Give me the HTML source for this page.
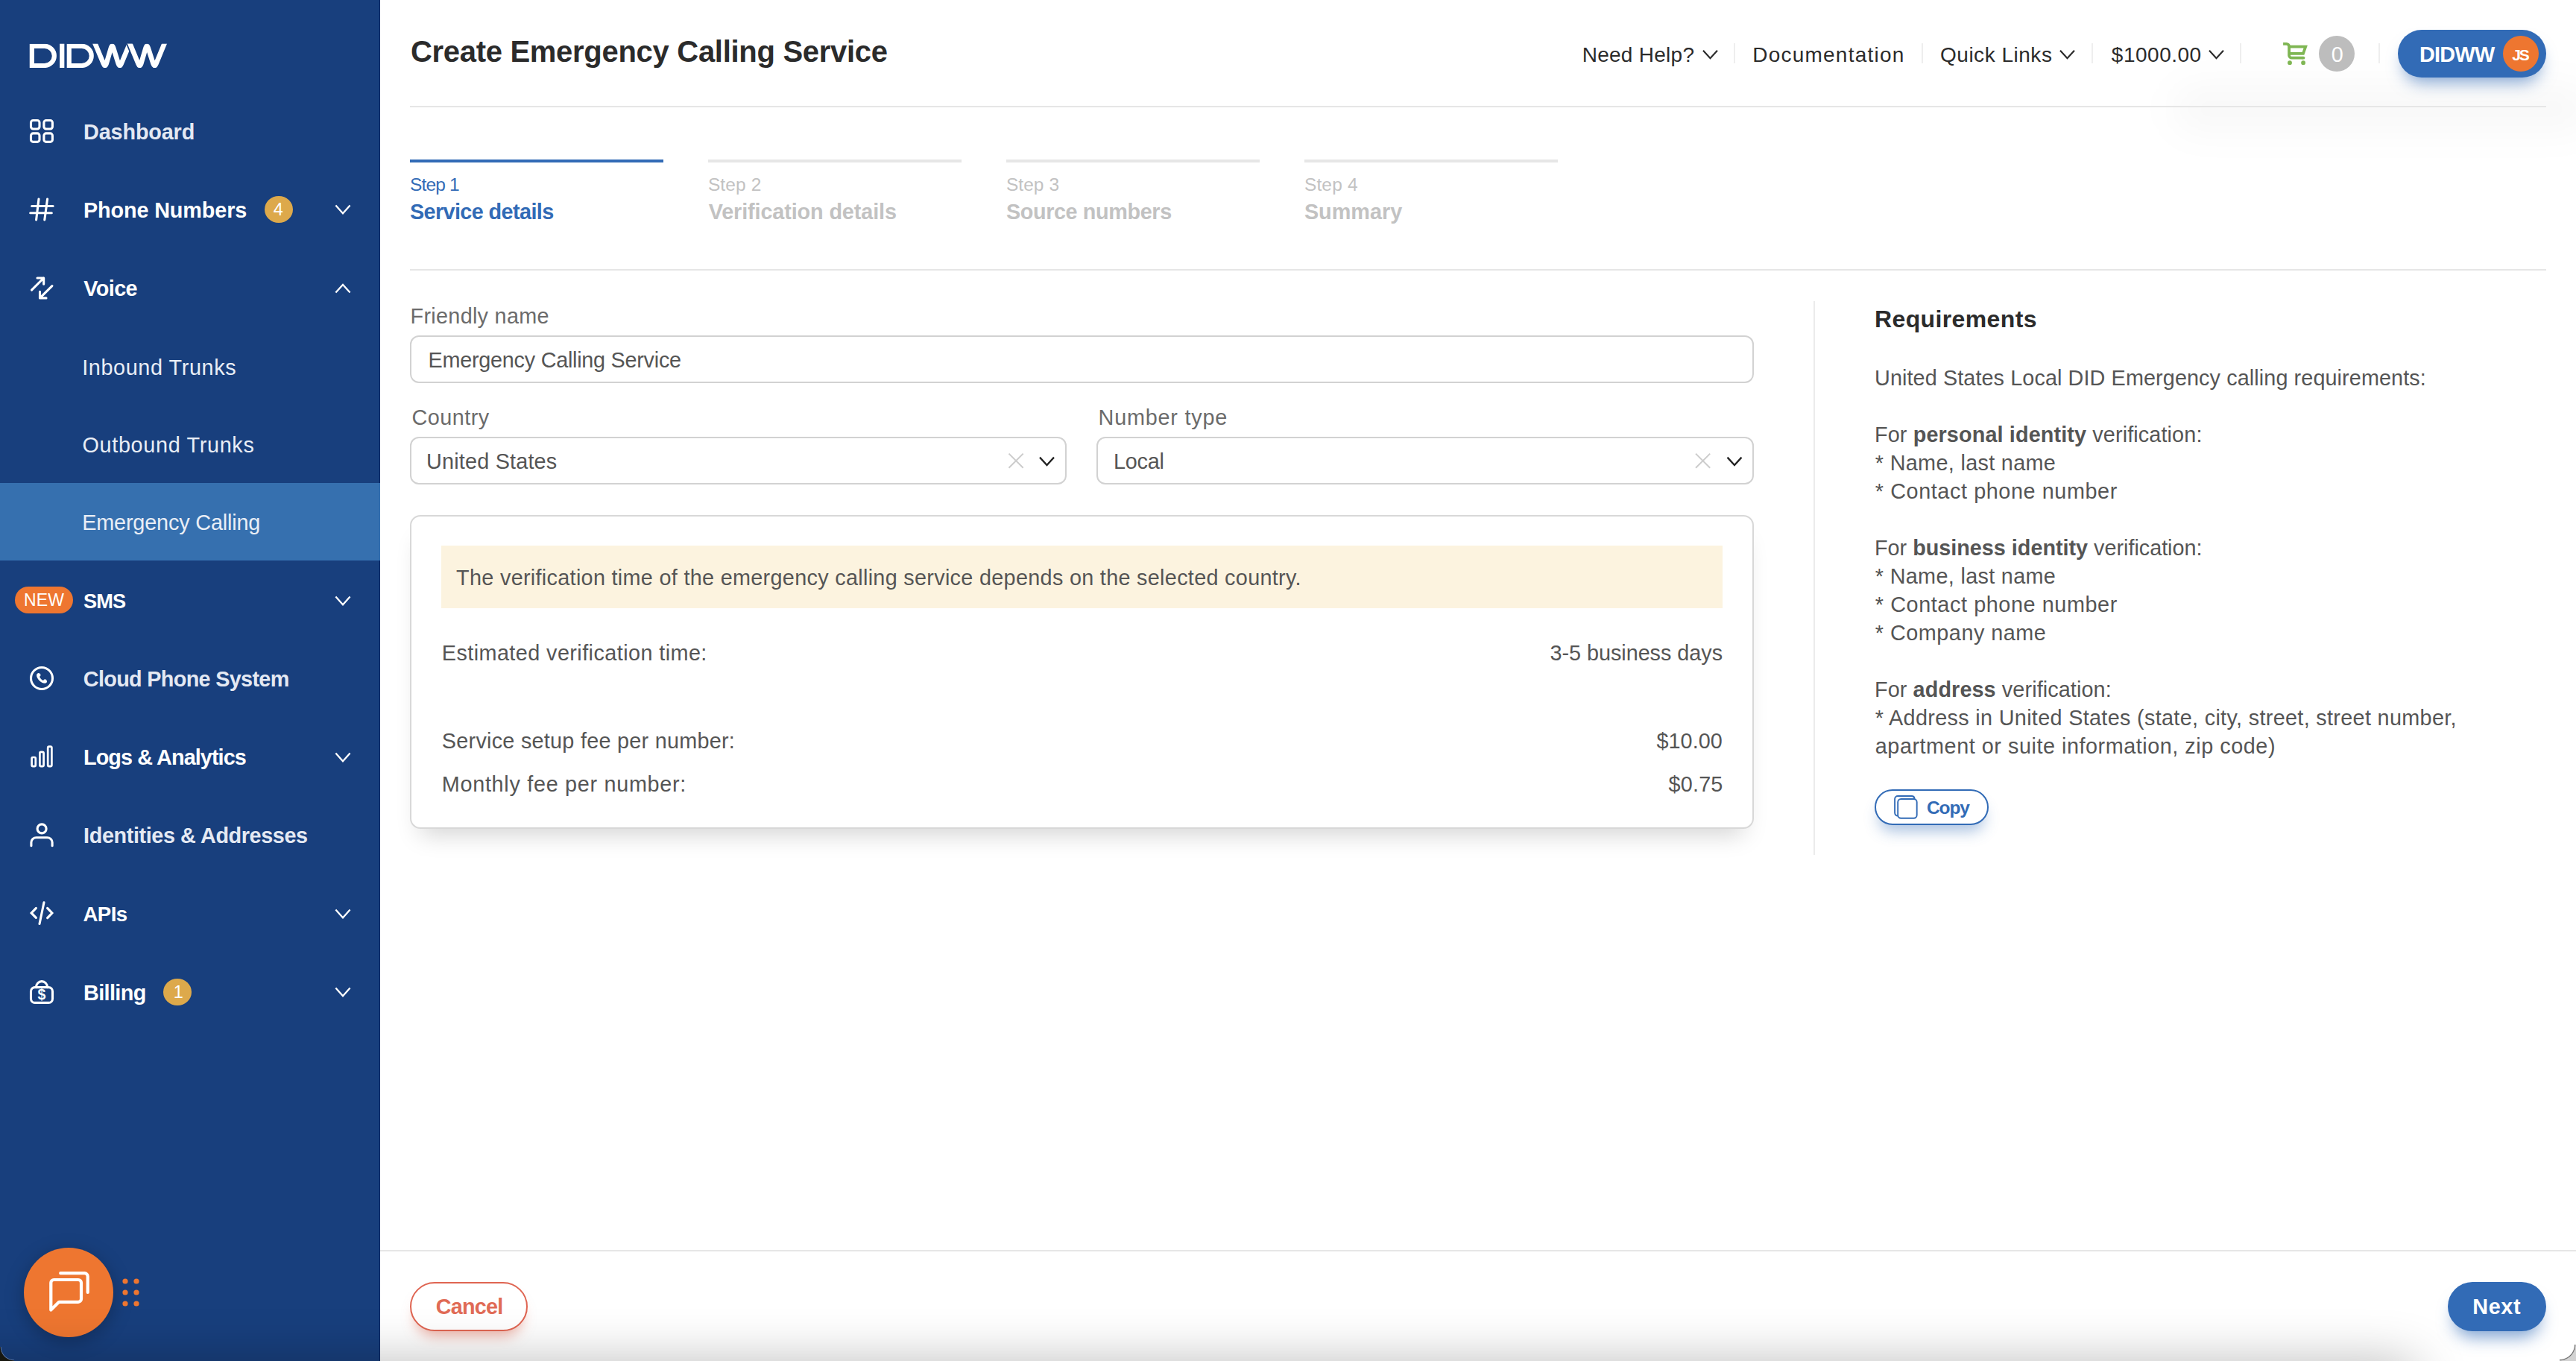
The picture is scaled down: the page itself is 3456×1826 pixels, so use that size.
<!DOCTYPE html>
<html lang="en"><head><meta charset="utf-8"><title>Create Emergency Calling Service</title>
<style>
*{box-sizing:border-box;margin:0;padding:0}
html,body{width:3456px;height:1826px;overflow:hidden;background:#fff}
body{position:relative;font-family:"Liberation Sans",sans-serif;color:#555555}
.a{position:absolute}
.t{position:absolute;white-space:nowrap;line-height:1;font-family:"Liberation Sans",sans-serif}
.t b{font-weight:700}
svg{position:absolute;overflow:visible}
.sidebar{left:0;top:0;width:510px;height:1826px;background:#183f7d;box-shadow:inset -1px 0 0 rgba(0,25,80,.55)}
.active{left:0;top:648px;width:510px;height:104px;background:#3670af}
.hl{height:2px;background:#e6e6e6}
.vsep{width:2px;height:27px;top:58px;background:#eeeeee}
.badge{border-radius:50%;background:#dda94b}
.inp{border:2px solid #d2d2d2;border-radius:12px;background:#fff}
.card{left:550px;top:690.5px;width:1803px;height:421px;border:2px solid #d8d8d8;border-radius:14px;background:#fff;box-shadow:0 22px 30px -14px rgba(0,0,0,.17)}
.banner{left:592px;top:732px;width:1719px;height:84px;background:#fcf3df}
.pill{border-radius:40px}
.bottomshade{left:-120px;top:1830px;width:3360px;height:60px;background:#000;box-shadow:0 0 70px 0 rgba(0,0,0,.30)}
.cbl{left:0;top:1807px;width:19px;height:19px;background:radial-gradient(circle at 100% 0%,rgba(0,0,0,0) 17px,rgba(150,170,210,.55) 17.8px,#17170f 18.8px)}
.cbr{left:3434px;top:1804px;width:22px;height:22px;background:radial-gradient(circle at 0% 0%,rgba(0,0,0,0) 19.5px,#6a6a6a 20.5px,#d2d2d2 21.8px)}

</style></head><body>
<!-- ===== main area chrome ===== -->
<div class="a" style="left:2915px;top:114px;width:560px;height:64px;border-radius:30px;background:rgba(0,0,0,.028);filter:blur(24px)"></div>
<div class="a hl" style="left:550px;top:142px;width:2866px"></div>
<div class="a hl" style="left:550px;top:361px;width:2866px"></div>
<div class="a hl" style="left:510px;top:1677px;width:2946px"></div>

<!-- steps -->
<div class="a" style="left:550px;top:214px;width:340px;height:4px;background:#326bb6"></div>
<div class="a" style="left:950px;top:214px;width:340px;height:4px;background:#e6e6e6"></div>
<div class="a" style="left:1350px;top:214px;width:340px;height:4px;background:#e6e6e6"></div>
<div class="a" style="left:1750px;top:214px;width:340px;height:4px;background:#e6e6e6"></div>

<!-- header separators -->
<div class="a vsep" style="left:2326px"></div>
<div class="a vsep" style="left:2578px"></div>
<div class="a vsep" style="left:2806px"></div>
<div class="a vsep" style="left:3005px"></div>
<div class="a vsep" style="left:3191px"></div>

<!-- cart count -->
<div class="a" style="left:3111px;top:48px;width:48px;height:48px;border-radius:50%;background:#bdbdbd"></div>
<!-- user pill -->
<div class="a pill" style="left:3217px;top:40px;width:199px;height:64px;background:#326bb6;box-shadow:0 14px 22px -8px rgba(50,107,182,.62)"></div>
<div class="a" style="left:3358px;top:48px;width:48px;height:48px;border-radius:50%;background:#ee7630"></div>

<!-- form -->
<div class="a inp" style="left:550px;top:450px;width:1803px;height:64px"></div>
<div class="a inp" style="left:550px;top:586px;width:881px;height:64px"></div>
<div class="a inp" style="left:1471px;top:586px;width:882px;height:64px"></div>
<div class="a card"></div>
<div class="a banner"></div>

<!-- vertical divider -->
<div class="a" style="left:2433px;top:404px;width:2px;height:743px;background:#ebebeb"></div>

<!-- copy button -->
<div class="a pill" style="left:2515px;top:1059px;width:153px;height:48px;border:2px solid #326bb6;background:#fff;box-shadow:0 14px 20px -6px rgba(50,107,182,.42)"></div>

<!-- footer buttons -->
<div class="a pill" style="left:550px;top:1720px;width:158px;height:66px;border:2px solid #df6552;background:#fff;box-shadow:0 14px 18px -8px rgba(224,112,90,.55)"></div>
<div class="a pill" style="left:3284px;top:1720px;width:132px;height:66px;background:#326bb6;box-shadow:0 16px 22px -8px rgba(50,107,182,.62)"></div>

<!-- ===== sidebar ===== -->
<div class="a sidebar"></div>
<div class="a active"></div>
<div class="a badge" style="left:355px;top:262.8px;width:38.4px;height:36.4px"></div>
<div class="a badge" style="left:218.9px;top:1312.8px;width:38.4px;height:36.4px"></div>
<div class="a pill" style="left:20px;top:787px;width:78px;height:36px;background:#ee7630"></div>
<div class="a" style="left:32px;top:1674px;width:120px;height:120px;border-radius:50%;background:#ee7630;box-shadow:0 6px 26px rgba(0,0,0,.26)"></div>
<svg class="a" style="left:0;top:0" width="3456" height="1826" viewBox="0 0 3456 1826" fill="none" stroke-linecap="round" stroke-linejoin="round">
<!-- logo (drawn in zoom coords: origin 20,40 scale 1/10.733) -->
<g transform="translate(20 40) scale(0.09317)">
  <clipPath id="lc"><rect x="0" y="202" width="2576" height="346"/></clipPath>
  <g clip-path="url(#lc)" stroke="#fff" fill="none" stroke-linecap="butt">
    <path d="M245,235 H427 A140,140 0 0 1 427,515 H245 Z" stroke-width="66" stroke-linejoin="miter"/>
    <path d="M678.5,190 V560" stroke-width="67"/>
    <path d="M781,235 H963 A140,140 0 0 1 963,515 H781 Z" stroke-width="66" stroke-linejoin="miter"/>
    <path d="M1134.7,150.0 L1276.1,487.8 Q1300.0,545.0 1317.5,485.5 L1382.5,264.5 Q1400.0,205.0 1418.8,264.1 L1489.2,485.9 Q1508.0,545.0 1531.9,487.8 L1672.7,150.0" stroke-width="70" stroke-linejoin="round"/>
    <path d="M1636.5,150.0 L1800,545" stroke="#183f7d" stroke-width="106"/>
    <path d="M1636.5,150.0 L1776.3,487.7 Q1800.0,545.0 1817.5,485.5 L1882.5,264.5 Q1900.0,205.0 1919.1,264.0 L1990.9,486.0 Q2010.0,545.0 2033.6,487.7 L2172.4,150.0" stroke-width="70" stroke-linejoin="round"/>
  </g>
</g>
<g stroke="#fff" stroke-width="3.1">
  <!-- dashboard -->
  <rect x="41.5" y="161.5" width="11.5" height="11.5" rx="3"/>
  <rect x="58.9" y="161.5" width="11.5" height="11.5" rx="3"/>
  <rect x="41.5" y="178.9" width="11.5" height="11.5" rx="3"/>
  <rect x="58.9" y="178.9" width="11.5" height="11.5" rx="3"/>
  <!-- hash -->
  <path d="M52,267 L48.6,294.9 M63.6,267 L59.8,294.9 M42.7,276.5 H71.1 M40.7,285.7 H69.3"/>
  <!-- voice -->
  <path d="M42.5,389.2 L58.65,373 M50,373 H58.65 V381.3 M69.9,383.7 L53.5,399.9 M53.5,391.4 V399.9 H62"/>
  <!-- cloud phone -->
  <circle cx="56" cy="910" r="14.5"/>
  <!-- identities -->
  <circle cx="56.1" cy="1111.9" r="6"/>
  <path d="M41.9,1134.7 V1130.3 A6.8,6.5 0 0 1 48.7,1123.8 H63.3 A6.8,6.5 0 0 1 70.1,1130.3 V1134.7"/>
  <!-- apis -->
  <path d="M59,1210.7 L53,1239.5 M48.4,1218.4 L42.1,1224.9 L48.4,1231.4 M63.6,1218.4 L69.9,1225 L63.6,1231.6" stroke-linejoin="miter"/>
  <!-- billing -->
  <rect x="41.5" y="1324.6" width="29" height="20.8" rx="5.5"/>
  <path d="M48.4,1324.6 A7.6,8 0 0 1 63.6,1324.6"/>
</g>
<!-- phone handset -->
<path fill="#fff" d="M49.1,905.6 C49.3,904 50.6,903 51.7,903 C53,903.2 54.8,904.6 54.6,906 C54.4,907 53.4,907.2 53.2,907.9 C53.6,909.6 56.2,912.3 57.9,912.9 C58.7,912.9 59.2,911.4 60.2,911.3 C61.4,911.3 63.3,913.2 63.1,914.5 C62.8,915.8 61.6,916.7 60.5,916.8 C55.5,917.2 48.8,910.6 49.1,905.6 Z"/>
<!-- logs bars -->
<g stroke="#fff" stroke-width="2.7">
  <rect x="42.6" y="1016" width="5.2" height="12.2" rx="1.6"/>
  <rect x="53.4" y="1008.8" width="5.2" height="19.4" rx="1.6"/>
  <rect x="64.2" y="1001.6" width="5.2" height="26.6" rx="1.6"/>
</g>
<text x="56" y="1341" font-family="Liberation Sans, sans-serif" font-weight="700" font-size="19.5" fill="#fff" text-anchor="middle">$</text>
<!-- sidebar chevrons -->
<g stroke="#fff" stroke-width="2.3" stroke-linecap="butt" stroke-linejoin="miter">
  <path d="M450.4,275.6 L460,286.2 L469.6,275.6"/>
  <path d="M450.4,392.5 L460,382 L469.6,392.5"/>
  <path d="M450.4,800.6 L460,811.2 L469.6,800.6"/>
  <path d="M450.4,1010.6 L460,1021.2 L469.6,1010.6"/>
  <path d="M450.4,1220.6 L460,1231.2 L469.6,1220.6"/>
  <path d="M450.4,1325.6 L460,1336.2 L469.6,1325.6"/>
</g>
<!-- chat icon -->
<g stroke="#fff" stroke-width="4.2">
  <path d="M68.3,1757.6 V1721 A4,4 0 0 1 72.3,1717 H105 A4,4 0 0 1 109,1721 V1742.8 A4,4 0 0 1 105,1746.8 H79.2 Z"/>
  <path d="M81.2,1708.2 H113.5 A4.2,4.2 0 0 1 117.7,1712.4 V1734"/>
</g>
<g fill="#ee7630">
  <circle cx="168" cy="1719" r="3.6"/><circle cx="183" cy="1719" r="3.6"/>
  <circle cx="168" cy="1734" r="3.6"/><circle cx="183" cy="1734" r="3.6"/>
  <circle cx="168" cy="1749" r="3.6"/><circle cx="183" cy="1749" r="3.6"/>
</g>
<!-- header chevrons -->
<g stroke="#2b2b2b" stroke-width="2.2" stroke-linecap="butt" stroke-linejoin="miter">
  <path d="M2285,67.8 L2294.5,78.2 L2304,67.8"/>
  <path d="M2764,67.8 L2773.5,78.2 L2783,67.8"/>
  <path d="M2964,67.8 L2973.5,78.2 L2983,67.8"/>
</g>
<!-- cart -->
<g stroke="#7fb653" stroke-width="3.8" stroke-linecap="butt" stroke-linejoin="miter">
  <path d="M3063.1,58.9 H3067.5 A3.6,3.6 0 0 1 3071.1,62.5 V74.2 A3.5,3.5 0 0 0 3074.6,77.7 H3089.5" />
  <path d="M3089.5,77.7 H3090.5" stroke-linecap="round"/>
  <path d="M3071.1,62.7 H3093.2 L3090,71.8 H3071.1"/>
</g>
<circle cx="3072" cy="84.2" r="2.9" fill="#7fb653"/><circle cx="3090.1" cy="84.2" r="2.9" fill="#7fb653"/>
<!-- select icons -->
<g stroke="#cccccc" stroke-width="2" stroke-linecap="butt">
  <path d="M1353.5,608.6 L1372.7,627.8 M1372.7,608.6 L1353.5,627.8"/>
  <path d="M2275,608.6 L2294.2,627.8 M2294.2,608.6 L2275,627.8"/>
</g>
<g stroke="#222" stroke-width="2.3" stroke-linecap="butt" stroke-linejoin="miter">
  <path d="M1395,613.6 L1404.5,624 L1414,613.6"/>
  <path d="M2317.5,613.6 L2327,624 L2336.5,613.6"/>
</g>
<!-- copy icon -->
<g stroke="#326bb6" stroke-width="1.9">
  <path d="M2546.2,1094.6 A4,4 0 0 1 2542.1,1090.6 V1072 A4,4 0 0 1 2546.1,1068 H2564.6 A4,4 0 0 1 2568.6,1071.4"/>
  <rect x="2546.2" y="1072" width="25.5" height="25.8" rx="4.2" fill="#fff"/>
</g>
</svg>

<div class="a bottomshade"></div>
<div class="a cbl"></div>
<div class="a cbr"></div>
<div id="title" class="t" style="left:550.9px;top:49.4px;font-size:40px;font-weight:700;color:#2b2b2b;letter-spacing:-0.294px">Create Emergency Calling Service</div>
<div id="h1" class="t" style="left:2122.7px;top:59.6px;font-size:28px;font-weight:400;color:#2b2b2b;letter-spacing:0.272px">Need Help?</div>
<div id="h2" class="t" style="left:2351.2px;top:59.6px;font-size:28px;font-weight:400;color:#2b2b2b;letter-spacing:1.235px">Documentation</div>
<div id="h3" class="t" style="left:2603.0px;top:59.6px;font-size:28px;font-weight:400;color:#2b2b2b;letter-spacing:0.516px">Quick Links</div>
<div id="h4" class="t" style="left:2832.8px;top:59.6px;font-size:28px;font-weight:400;color:#2b2b2b;letter-spacing:0.513px">$1000.00</div>
<div id="h5" class="t" style="left:3127.8px;top:59.1px;font-size:28.8px;font-weight:400;color:#ffffff;letter-spacing:0.000px">0</div>
<div id="h6" class="t" style="left:3246.0px;top:58.9px;font-size:28.8px;font-weight:700;color:#ffffff;letter-spacing:-0.711px">DIDWW</div>
<div id="h7" class="t" style="left:3370.2px;top:63.0px;font-size:21px;font-weight:700;color:#ffffff;letter-spacing:-2.144px">JS</div>
<div id="s1a" class="t" style="left:549.9px;top:236.0px;font-size:24.5px;font-weight:400;color:#326bb6;letter-spacing:-0.824px">Step 1</div>
<div id="s1b" class="t" style="left:549.9px;top:270.0px;font-size:28.8px;font-weight:700;color:#326bb6;letter-spacing:-0.595px">Service details</div>
<div id="s2a" class="t" style="left:949.9px;top:236.0px;font-size:24.5px;font-weight:400;color:#c2c2c2;letter-spacing:0.109px">Step 2</div>
<div id="s2b" class="t" style="left:950.7px;top:270.0px;font-size:28.8px;font-weight:700;color:#c2c2c2;letter-spacing:-0.118px">Verification details</div>
<div id="s3a" class="t" style="left:1349.9px;top:236.0px;font-size:24.5px;font-weight:400;color:#c2c2c2;letter-spacing:0.059px">Step 3</div>
<div id="s3b" class="t" style="left:1349.9px;top:270.0px;font-size:28.8px;font-weight:700;color:#c2c2c2;letter-spacing:-0.382px">Source numbers</div>
<div id="s4a" class="t" style="left:1749.9px;top:236.0px;font-size:24.5px;font-weight:400;color:#c2c2c2;letter-spacing:0.159px">Step 4</div>
<div id="s4b" class="t" style="left:1749.9px;top:270.0px;font-size:28.8px;font-weight:700;color:#c2c2c2;letter-spacing:0.007px">Summary</div>
<div id="f1" class="t" style="left:550.6px;top:410.0px;font-size:28.8px;font-weight:400;color:#6b6b6b;letter-spacing:0.287px">Friendly name</div>
<div id="f2" class="t" style="left:574.6px;top:469.0px;font-size:28.8px;font-weight:400;color:#555555;letter-spacing:-0.261px">Emergency Calling Service</div>
<div id="f3" class="t" style="left:552.4px;top:546.0px;font-size:28.8px;font-weight:400;color:#6b6b6b;letter-spacing:0.494px">Country</div>
<div id="f4" class="t" style="left:572.1px;top:605.0px;font-size:28.8px;font-weight:400;color:#555555;letter-spacing:0.185px">United States</div>
<div id="f5" class="t" style="left:1473.6px;top:546.1px;font-size:28.8px;font-weight:400;color:#6b6b6b;letter-spacing:0.786px">Number type</div>
<div id="f6" class="t" style="left:1494.0px;top:605.1px;font-size:28.8px;font-weight:400;color:#555555;letter-spacing:-0.249px">Local</div>
<div id="c1" class="t" style="left:612.1px;top:761.0px;font-size:28.8px;font-weight:400;color:#555555;letter-spacing:0.306px">The verification time of the emergency calling service depends on the selected country.</div>
<div id="c2" class="t" style="left:592.8px;top:862.1px;font-size:28.8px;font-weight:400;color:#555555;letter-spacing:0.425px">Estimated verification time:</div>
<div id="c3" class="t" style="right:1145.0px;top:862.4px;font-size:28.8px;font-weight:400;color:#555555;letter-spacing:-0.036px">3-5 business days</div>
<div id="c4" class="t" style="left:592.8px;top:980.1px;font-size:28.8px;font-weight:400;color:#555555;letter-spacing:0.260px">Service setup fee per number:</div>
<div id="c5" class="t" style="right:1145.2px;top:980.0px;font-size:28.8px;font-weight:400;color:#555555;letter-spacing:0.037px">$10.00</div>
<div id="c6" class="t" style="left:592.8px;top:1037.5px;font-size:28.8px;font-weight:400;color:#555555;letter-spacing:0.698px">Monthly fee per number:</div>
<div id="c7" class="t" style="right:1144.4px;top:1037.5px;font-size:28.8px;font-weight:400;color:#555555;letter-spacing:0.224px">$0.75</div>
<div id="r0" class="t" style="left:2515.0px;top:411.5px;font-size:32px;font-weight:700;color:#2b2b2b;letter-spacing:0.376px">Requirements</div>
<div id="r1" class="t" style="left:2515.0px;top:493.2px;font-size:28.8px;font-weight:400;color:#555555;letter-spacing:0.095px">United States Local DID Emergency calling requirements:</div>
<div id="r2" class="t" style="left:2515.0px;top:569.1px;font-size:28.8px;font-weight:400;color:#555555;letter-spacing:0.121px">For <b>personal identity</b> verification:</div>
<div id="r3" class="t" style="left:2515.8px;top:607.1px;font-size:28.8px;font-weight:400;color:#555555;letter-spacing:0.325px">* Name, last name</div>
<div id="r4" class="t" style="left:2515.8px;top:645.1px;font-size:28.8px;font-weight:400;color:#555555;letter-spacing:0.588px">* Contact phone number</div>
<div id="r5" class="t" style="left:2515.0px;top:721.0px;font-size:28.8px;font-weight:400;color:#555555;letter-spacing:-0.017px">For <b>business identity</b> verification:</div>
<div id="r6" class="t" style="left:2515.8px;top:759.0px;font-size:28.8px;font-weight:400;color:#555555;letter-spacing:0.325px">* Name, last name</div>
<div id="r7" class="t" style="left:2515.8px;top:797.0px;font-size:28.8px;font-weight:400;color:#555555;letter-spacing:0.588px">* Contact phone number</div>
<div id="r8" class="t" style="left:2515.8px;top:834.9px;font-size:28.8px;font-weight:400;color:#555555;letter-spacing:0.507px">* Company name</div>
<div id="r9" class="t" style="left:2515.0px;top:910.9px;font-size:28.8px;font-weight:400;color:#555555;letter-spacing:0.099px">For <b>address</b> verification:</div>
<div id="r10" class="t" style="left:2515.8px;top:948.8px;font-size:28.8px;font-weight:400;color:#555555;letter-spacing:0.323px">* Address in United States (state, city, street, street number,</div>
<div id="r11" class="t" style="left:2515.8px;top:986.8px;font-size:28.8px;font-weight:400;color:#555555;letter-spacing:0.532px">apartment or suite information, zip code)</div>
<div id="r12" class="t" style="left:2585.0px;top:1071.7px;font-size:24.5px;font-weight:700;color:#326bb6;letter-spacing:-1.113px">Copy</div>
<div id="b1" class="t" style="left:584.8px;top:1739.0px;font-size:28.8px;font-weight:700;color:#e06a55;letter-spacing:-0.806px">Cancel</div>
<div id="b2" class="t" style="left:3317.2px;top:1738.6px;font-size:28.8px;font-weight:700;color:#ffffff;letter-spacing:0.670px">Next</div>
<div id="n1" class="t" style="left:112.1px;top:162.9px;font-size:28.8px;font-weight:700;color:#e4e9f3;letter-spacing:-0.158px">Dashboard</div>
<div id="n2" class="t" style="left:111.9px;top:268.0px;font-size:28.8px;font-weight:700;color:#ffffff;letter-spacing:-0.118px">Phone Numbers</div>
<div id="n3" class="t" style="left:112.3px;top:373.1px;font-size:28.8px;font-weight:700;color:#ffffff;letter-spacing:-0.601px">Voice</div>
<div id="n4" class="t" style="left:110.2px;top:479.0px;font-size:28.8px;font-weight:400;color:#e9eef6;letter-spacing:0.606px">Inbound Trunks</div>
<div id="n5" class="t" style="left:110.5px;top:582.8px;font-size:28.8px;font-weight:400;color:#e9eef6;letter-spacing:0.672px">Outbound Trunks</div>
<div id="n6" class="t" style="left:110.2px;top:686.5px;font-size:28.8px;font-weight:400;color:#e9eef6;letter-spacing:-0.158px">Emergency Calling</div>
<div id="n7" class="t" style="left:111.9px;top:793.3px;font-size:27.2px;font-weight:700;color:#ffffff;letter-spacing:-0.874px">SMS</div>
<div id="n8" class="t" style="left:111.8px;top:897.1px;font-size:28.8px;font-weight:700;color:#e4e9f3;letter-spacing:-0.679px">Cloud Phone System</div>
<div id="n9" class="t" style="left:112.0px;top:1001.9px;font-size:28.8px;font-weight:700;color:#ffffff;letter-spacing:-0.916px">Logs &amp; Analytics</div>
<div id="n10" class="t" style="left:112.1px;top:1107.0px;font-size:28.8px;font-weight:700;color:#e4e9f3;letter-spacing:-0.400px">Identities &amp; Addresses</div>
<div id="n11" class="t" style="left:111.4px;top:1213.0px;font-size:27.6px;font-weight:700;color:#ffffff;letter-spacing:-0.515px">APIs</div>
<div id="n12" class="t" style="left:112.1px;top:1318.0px;font-size:28.8px;font-weight:700;color:#ffffff;letter-spacing:-0.641px">Billing</div>
<div id="nb1" class="t" style="left:366.8px;top:270.4px;font-size:23.5px;font-weight:400;color:#ffffff;letter-spacing:0.000px">4</div>
<div id="nb2" class="t" style="left:232.7px;top:1320.4px;font-size:23.5px;font-weight:400;color:#ffffff;letter-spacing:0.000px">1</div>
<div id="nb3" class="t" style="left:32.0px;top:794.4px;font-size:23px;font-weight:400;color:#ffffff;letter-spacing:0.143px">NEW</div>
</body></html>
